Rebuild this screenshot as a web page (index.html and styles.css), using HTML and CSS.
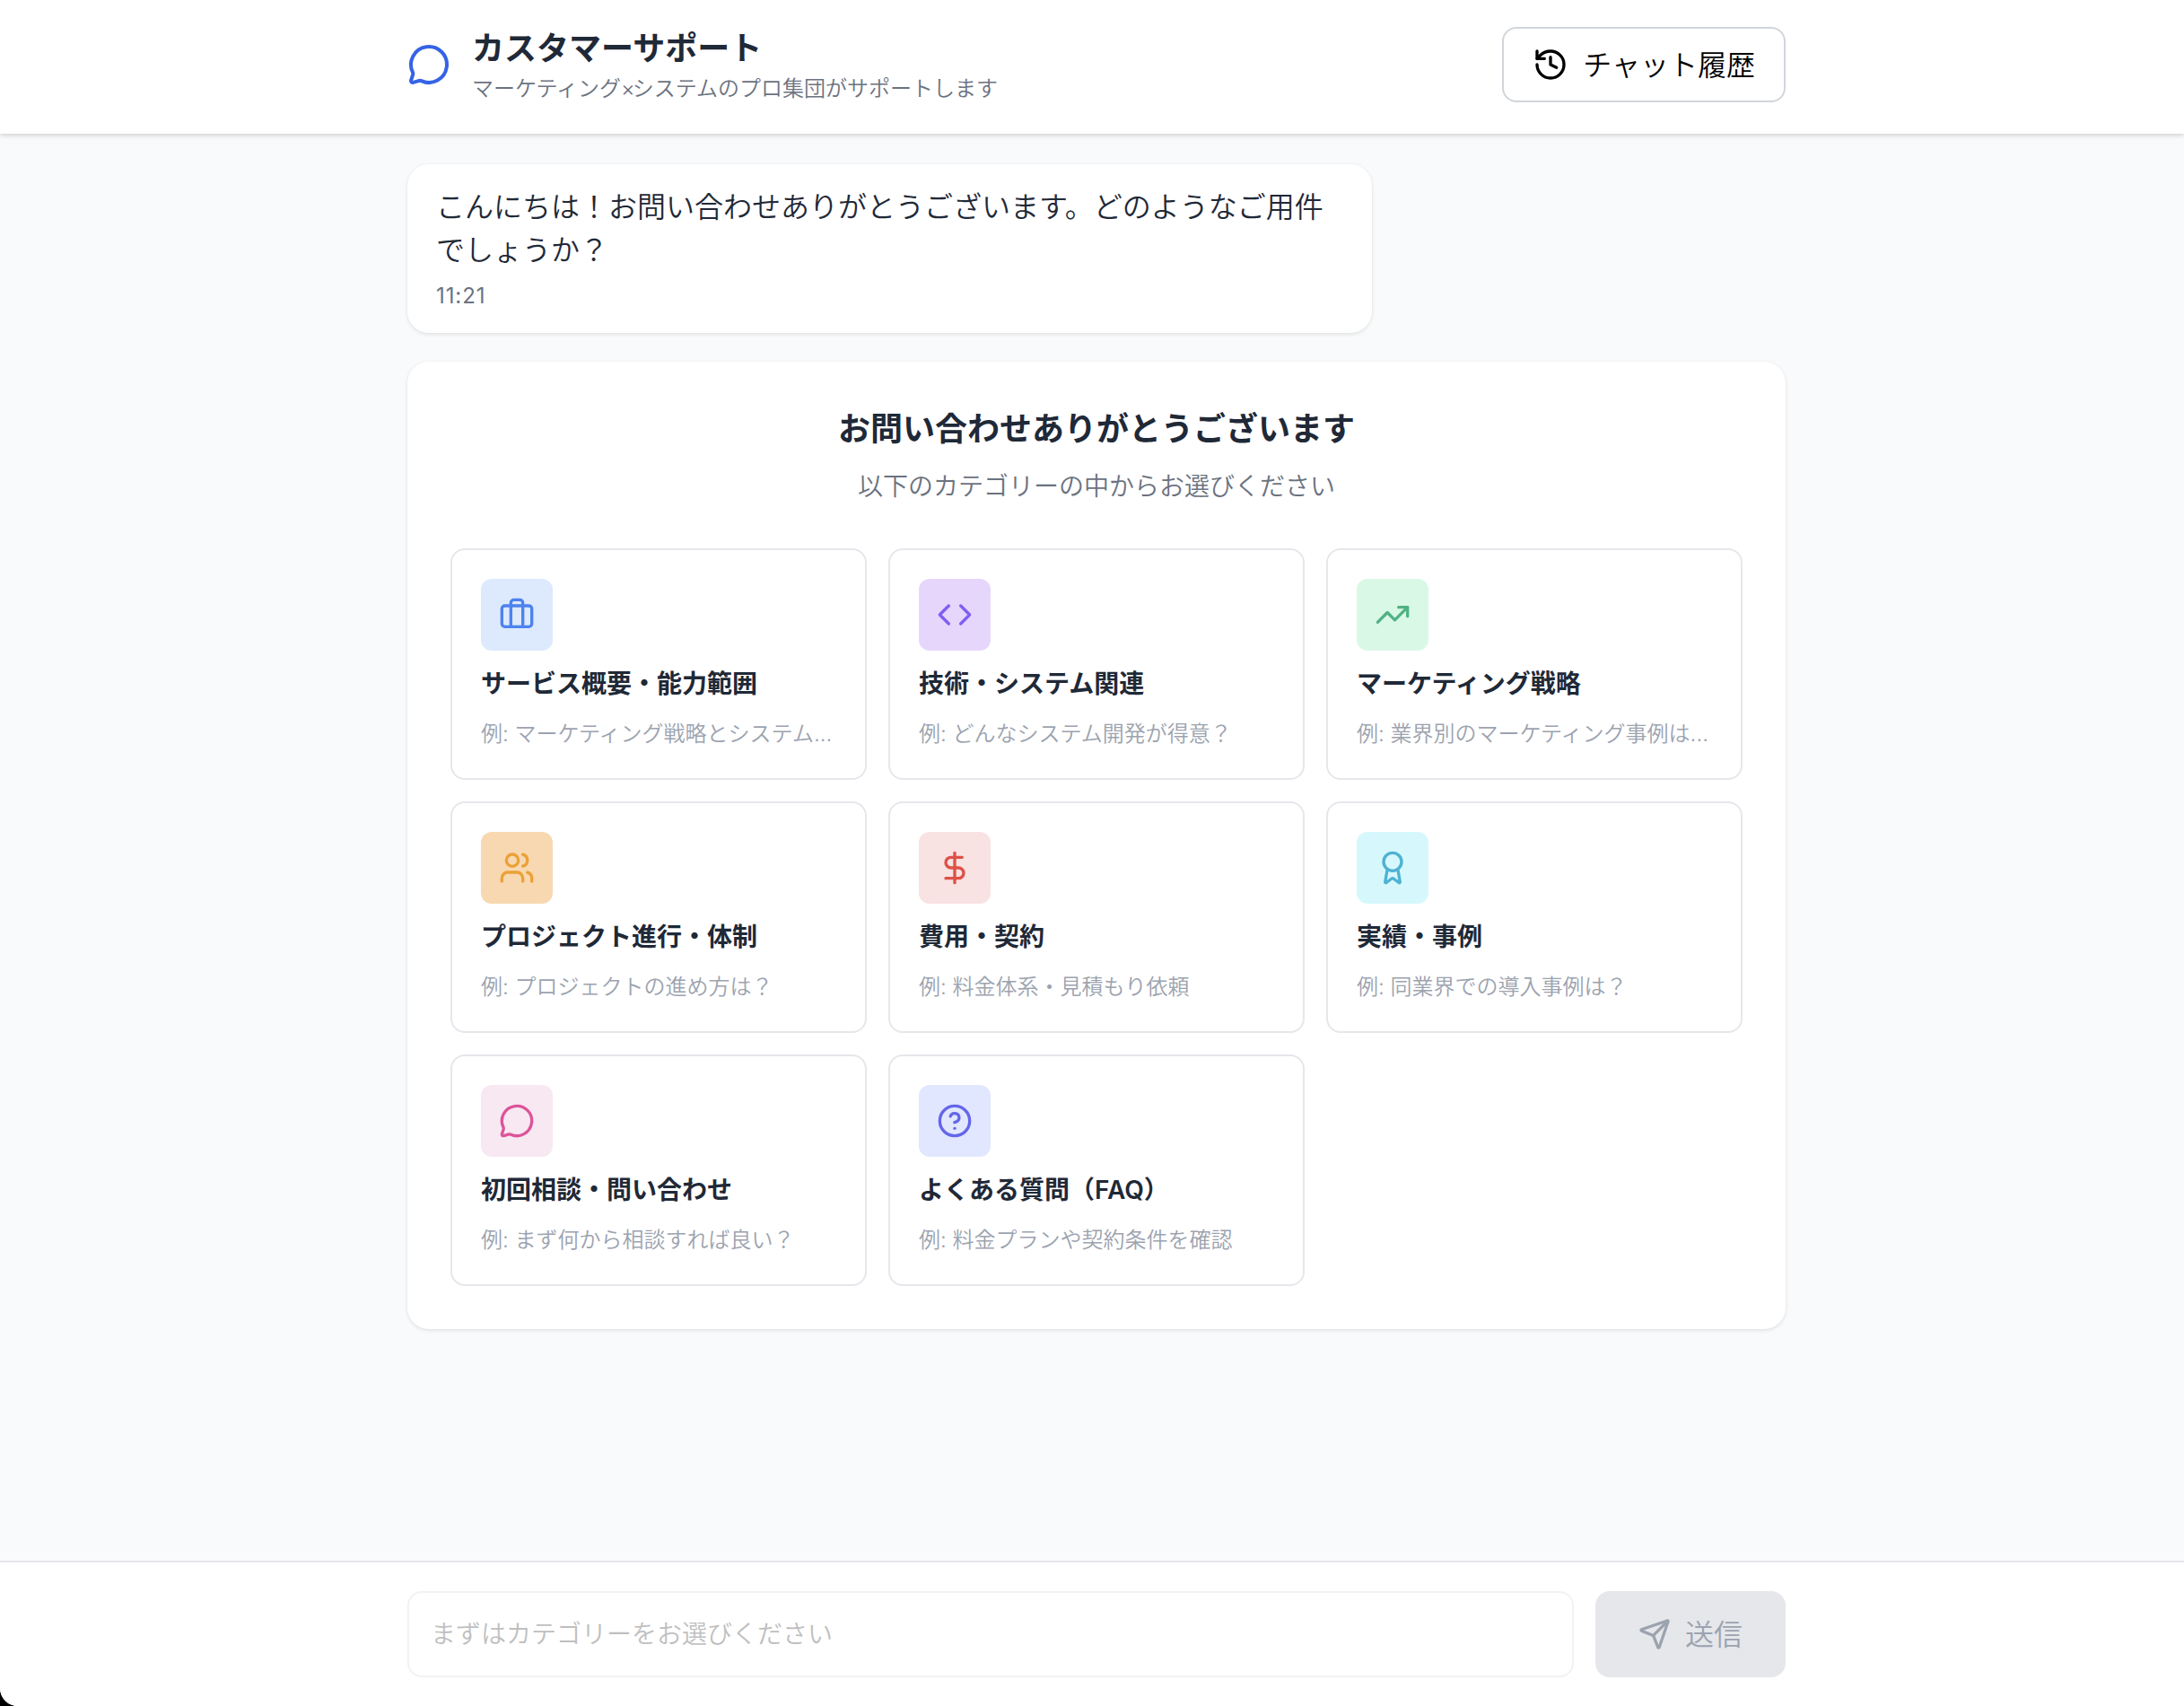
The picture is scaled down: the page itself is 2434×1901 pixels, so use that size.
FILE: index.html
```html
<!DOCTYPE html>
<html lang="ja">
<head>
<meta charset="utf-8">
<title>カスタマーサポート</title>
<link rel="stylesheet" href="styles.css">
</head>
<body>
<div class="app">
  <header class="header">
    <div class="container header-row">
      <div class="brand">
        <svg class="icon brand-icon" viewBox="0 0 24 24"><path d="M2.992 16.342a2 2 0 0 1 .094 1.167l-1.065 3.29a1 1 0 0 0 1.236 1.168l3.413-.998a2 2 0 0 1 1.099.092 10 10 0 1 0-4.777-4.719"/></svg>
        <div class="brand-text">
          <h1 class="brand-title">カスタマーサポート</h1>
          <p class="brand-sub">マーケティング<span class="times">×</span>システムのプロ集団がサポートします</p>
        </div>
      </div>
      <button class="history-btn" type="button">
        <svg class="icon history-icon" viewBox="0 0 24 24"><path d="M3 12a9 9 0 1 0 9-9 9.75 9.75 0 0 0-6.74 2.74L3 8"/><path d="M3 3v5h5"/><path d="M12 7v5l4 2"/></svg>
        <span class="btn-label">チャット履歴</span>
      </button>
    </div>
  </header>

  <main class="main">
    <div class="container chat">
      <div class="bubble">
        <p class="bubble-text">こんにちは！お問い合わせありがとうございます。どのようなご用件でしょうか？</p>
        <p class="bubble-time">11:21</p>
      </div>

      <section class="panel">
        <h2 class="panel-title">お問い合わせありがとうございます</h2>
        <p class="panel-sub">以下のカテゴリーの中からお選びください</p>
        <div class="grid">
          <div class="card">
            <div class="tile tile-blue"><svg class="icon" viewBox="0 0 24 24"><path d="M16 20V4a2 2 0 0 0-2-2h-4a2 2 0 0 0-2 2v16"/><rect width="20" height="14" x="2" y="6" rx="2"/></svg></div>
            <h3 class="card-title">サービス概要・能力範囲</h3>
            <p class="card-desc">例: マーケティング戦略とシステム...</p>
          </div>
          <div class="card">
            <div class="tile tile-purple"><svg class="icon" viewBox="0 0 24 24"><path d="m16 18 6-6-6-6"/><path d="m8 6-6 6 6 6"/></svg></div>
            <h3 class="card-title">技術・システム関連</h3>
            <p class="card-desc">例: どんなシステム開発が得意？</p>
          </div>
          <div class="card">
            <div class="tile tile-green"><svg class="icon" viewBox="0 0 24 24"><path d="M16 7h6v6"/><path d="m22 7-8.5 8.5-5-5L2 17"/></svg></div>
            <h3 class="card-title">マーケティング戦略</h3>
            <p class="card-desc">例: 業界別のマーケティング事例は...</p>
          </div>
          <div class="card">
            <div class="tile tile-orange"><svg class="icon" viewBox="0 0 24 24"><path d="M16 21v-2a4 4 0 0 0-4-4H6a4 4 0 0 0-4 4v2"/><path d="M16 3.128a4 4 0 0 1 0 7.744"/><path d="M22 21v-2a4 4 0 0 0-3-3.87"/><circle cx="9" cy="7" r="4"/></svg></div>
            <h3 class="card-title">プロジェクト進行・体制</h3>
            <p class="card-desc">例: プロジェクトの進め方は？</p>
          </div>
          <div class="card">
            <div class="tile tile-red"><svg class="icon" viewBox="0 0 24 24"><path d="M12 2v20"/><path d="M17 5H9.5a3.5 3.5 0 0 0 0 7h5a3.5 3.5 0 0 1 0 7H6"/></svg></div>
            <h3 class="card-title">費用・契約</h3>
            <p class="card-desc">例: 料金体系・見積もり依頼</p>
          </div>
          <div class="card">
            <div class="tile tile-cyan"><svg class="icon" viewBox="0 0 24 24"><path d="m15.477 12.89 1.515 8.526a.5.5 0 0 1-.81.47l-3.58-2.687a1 1 0 0 0-1.197 0l-3.586 2.686a.5.5 0 0 1-.81-.469l1.514-8.526"/><circle cx="12" cy="8" r="6"/></svg></div>
            <h3 class="card-title">実績・事例</h3>
            <p class="card-desc">例: 同業界での導入事例は？</p>
          </div>
          <div class="card">
            <div class="tile tile-pink"><svg class="icon" viewBox="0 0 24 24"><path d="M2.992 16.342a2 2 0 0 1 .094 1.167l-1.065 3.29a1 1 0 0 0 1.236 1.168l3.413-.998a2 2 0 0 1 1.099.092 10 10 0 1 0-4.777-4.719"/></svg></div>
            <h3 class="card-title">初回相談・問い合わせ</h3>
            <p class="card-desc">例: まず何から相談すれば良い？</p>
          </div>
          <div class="card">
            <div class="tile tile-indigo"><svg class="icon" viewBox="0 0 24 24"><circle cx="12" cy="12" r="10"/><path d="M9.09 9a3 3 0 0 1 5.83 1c0 2-3 3-3 3"/><path d="M12 17h.01"/></svg></div>
            <h3 class="card-title">よくある質問（FAQ）</h3>
            <p class="card-desc">例: 料金プランや契約条件を確認</p>
          </div>
        </div>
      </section>
    </div>
  </main>

  <footer class="footer">
    <div class="container composer">
      <input class="composer-input" type="text" placeholder="まずはカテゴリーをお選びください" disabled>
      <button class="send-btn" type="button" disabled>
        <svg class="icon send-icon" viewBox="0 0 24 24"><path d="M14.536 21.686a.5.5 0 0 0 .937-.024l6.5-19a.496.496 0 0 0-.635-.635l-19 6.5a.5.5 0 0 0-.024.937l7.93 3.18a2 2 0 0 1 1.112 1.11z"/><path d="m21.854 2.147-10.94 10.939"/></svg>
        <span class="btn-label">送信</span>
      </button>
    </div>
  </footer>
</div>
</body>
</html>
```
FILE: styles.css
```css
* { box-sizing: border-box; margin: 0; padding: 0; }

html { background: #000; }

body {
  font-family: Inter, "Noto Sans CJK JP", sans-serif;
  font-weight: 350;
  color: #1f2937;
}

button, input { font: inherit; }

.app {
  height: 1901px;
  display: flex;
  flex-direction: column;
  background: #f9fafb;
  border-bottom-left-radius: 20px;
  overflow: hidden;
}

.container {
  width: 1536px;
  margin-left: 454px;
}

.icon {
  display: block;
  width: 40px;
  height: 40px;
  flex: none;
  fill: none;
  stroke: currentColor;
  stroke-width: 2;
  stroke-linecap: round;
  stroke-linejoin: round;
}

/* Header */
.header {
  height: 149px;
  flex: none;
  background: #fff;
  box-shadow: 0 2px 6px rgba(0, 0, 0, .1), 0 2px 4px rgba(0, 0, 0, .07);
  z-index: 1;
}
.header-row {
  height: 144px;
  display: flex;
  align-items: center;
  justify-content: space-between;
}
.brand { display: flex; align-items: center; gap: 24px; }
.brand-icon { width: 48px; height: 48px; color: #3563e6; }
.brand-title { font-size: 36px; line-height: 54px; font-weight: 700; }
.brand-sub { font-size: 24px; line-height: 36px; color: #6b7280; }
.times { letter-spacing: -3px; }
.history-btn {
  display: flex;
  align-items: center;
  gap: 16px;
  height: 84px;
  padding: 0 32px;
  border: 2px solid #d1d5db;
  border-radius: 16px;
  background: #fff;
  color: #000;
  font-size: 32px;
}
.btn-label { padding-bottom: 4px; }

/* Conversation */
.main { flex: 1; padding-top: 34px; }
.chat { display: flex; flex-direction: column; gap: 32px; align-items: flex-start; }
.bubble {
  width: 70%;
  padding: 24px 32px;
  border-radius: 24px;
  background: #fff;
  box-shadow: 0 2px 4px rgba(0, 0, 0, .08), 0 0 4px rgba(0, 0, 0, .04);
}
.bubble-text { font-size: 32px; line-height: 48px; }
.bubble-time {
  margin-top: 8px;
  padding-top: 1px;
  font-size: 24px;
  font-weight: 400;
  line-height: 35px;
  letter-spacing: .9px;
  color: #6b7280;
}

.panel {
  width: 100%;
  padding: 48px;
  border-radius: 24px;
  background: #fff;
  box-shadow: 0 2px 4px rgba(0, 0, 0, .08), 0 0 4px rgba(0, 0, 0, .04);
}
.panel-title { font-size: 36px; line-height: 54px; font-weight: 700; text-align: center; }
.panel-sub { margin: 16px 0 48px; font-size: 28px; line-height: 42px; text-align: center; color: #6b7280; }

.grid { display: grid; grid-template-columns: repeat(3, 1fr); gap: 24px; }
.card {
  min-width: 0;
  padding: 32px;
  border: 2px solid #e5e7eb;
  border-radius: 16px;
}
.card-title { margin: 16px 0; font-size: 28px; line-height: 42px; font-weight: 600; }
.card-desc { padding-top: 1px; font-size: 24px; line-height: 35px; color: #9ca3af; white-space: nowrap; }

.tile {
  width: 80px;
  height: 80px;
  display: flex;
  align-items: center;
  justify-content: center;
  border-radius: 12px;
}
.tile-blue { background: #dde9fc; color: #4d82f0; }
.tile-purple { background: #e6d6fc; color: #835df1; }
.tile-green { background: #daf8e6; color: #50b284; }
.tile-orange { background: #f8d8b0; color: #eaa137; }
.tile-red { background: #f9e2e2; color: #dd5148; }
.tile-cyan { background: #d6f8fd; color: #4eb2d3; }
.tile-pink { background: #f8e8f2; color: #dc5499; }
.tile-indigo { background: #e1e7fe; color: #6466ea; }

/* Composer */
.footer {
  flex: none;
  padding: 32px 0;
  border-top: 2px solid #e5e7eb;
  background: #fff;
}
.composer { display: flex; gap: 24px; }
.composer-input {
  flex: 1;
  height: 96px;
  padding: 0 24px;
  border: 2px solid #f1f2f3;
  border-radius: 16px;
  background: #fff;
  font-size: 28px;
}
.composer-input::placeholder { color: #bfbfbf; opacity: 1; }
.send-btn {
  display: flex;
  align-items: center;
  gap: 16px;
  height: 96px;
  padding: 0 48px;
  border: 0;
  border-radius: 16px;
  background: #e5e7eb;
  color: #9ca3af;
  font-size: 32px;
}
.send-icon { width: 36px; height: 36px; stroke-width: 2.2; }
```
